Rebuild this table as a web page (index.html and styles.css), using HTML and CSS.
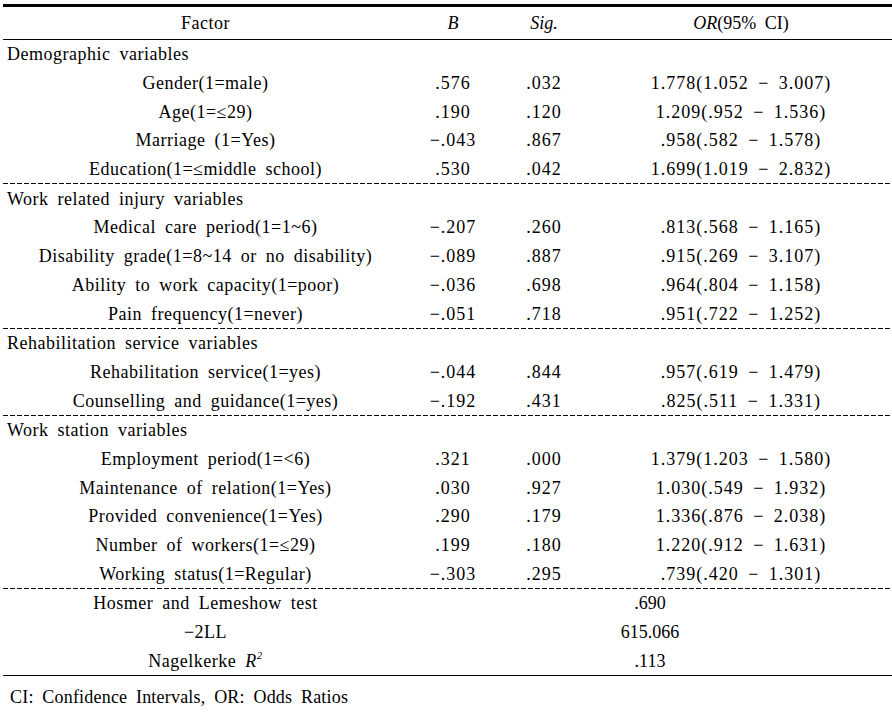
FILE: index.html
```html
<!DOCTYPE html>
<html>
<head>
<meta charset="utf-8">
<link rel="stylesheet" href="styles.css">
</head>
<body>
<div class="page">
<table class="tbl">
  <colgroup>
    <col class="c-factor"><col class="c-b"><col class="c-sig"><col class="c-or">
  </colgroup>
  <thead>
    <tr class="head">
      <th class="lbl">Factor</th><th><i>B</i></th><th><i>Sig.</i></th><th><i>OR</i>(95% CI)</th>
    </tr>
  </thead>
  <tbody>
    <tr class="sec"><td colspan="4">Demographic variables</td></tr>
    <tr><td class="lbl">Gender(1=male)</td><td class="num">.576</td><td class="num">.032</td><td class="num">1.778(1.052 − 3.007)</td></tr>
    <tr><td class="lbl">Age(1=≤29)</td><td class="num">.190</td><td class="num">.120</td><td class="num">1.209(.952 − 1.536)</td></tr>
    <tr><td class="lbl">Marriage (1=Yes)</td><td class="num">−.043</td><td class="num">.867</td><td class="num">.958(.582 − 1.578)</td></tr>
    <tr><td class="lbl">Education(1=≤middle school)</td><td class="num">.530</td><td class="num">.042</td><td class="num">1.699(1.019 − 2.832)</td></tr>
    <tr class="sep"><td colspan="4"></td></tr>
    <tr class="sec"><td colspan="4">Work related injury variables</td></tr>
    <tr><td class="lbl">Medical care period(1=1~6)</td><td class="num">−.207</td><td class="num">.260</td><td class="num">.813(.568 − 1.165)</td></tr>
    <tr><td class="lbl">Disability grade(1=8~14 or no disability)</td><td class="num">−.089</td><td class="num">.887</td><td class="num">.915(.269 − 3.107)</td></tr>
    <tr><td class="lbl">Ability to work capacity(1=poor)</td><td class="num">−.036</td><td class="num">.698</td><td class="num">.964(.804 − 1.158)</td></tr>
    <tr><td class="lbl">Pain frequency(1=never)</td><td class="num">−.051</td><td class="num">.718</td><td class="num">.951(.722 − 1.252)</td></tr>
    <tr class="sep"><td colspan="4"></td></tr>
    <tr class="sec"><td colspan="4">Rehabilitation service variables</td></tr>
    <tr><td class="lbl">Rehabilitation service(1=yes)</td><td class="num">−.044</td><td class="num">.844</td><td class="num">.957(.619 − 1.479)</td></tr>
    <tr><td class="lbl">Counselling and guidance(1=yes)</td><td class="num">−.192</td><td class="num">.431</td><td class="num">.825(.511 − 1.331)</td></tr>
    <tr class="sep"><td colspan="4"></td></tr>
    <tr class="sec"><td colspan="4">Work station variables</td></tr>
    <tr><td class="lbl">Employment period(1=&lt;6)</td><td class="num">.321</td><td class="num">.000</td><td class="num">1.379(1.203 − 1.580)</td></tr>
    <tr><td class="lbl">Maintenance of relation(1=Yes)</td><td class="num">.030</td><td class="num">.927</td><td class="num">1.030(.549 − 1.932)</td></tr>
    <tr><td class="lbl">Provided convenience(1=Yes)</td><td class="num">.290</td><td class="num">.179</td><td class="num">1.336(.876 − 2.038)</td></tr>
    <tr><td class="lbl">Number of workers(1=≤29)</td><td class="num">.199</td><td class="num">.180</td><td class="num">1.220(.912 − 1.631)</td></tr>
    <tr><td class="lbl">Working status(1=Regular)</td><td class="num">−.303</td><td class="num">.295</td><td class="num">.739(.420 − 1.301)</td></tr>
    <tr class="sep"><td colspan="4"></td></tr>
  </tbody>
  <tbody class="stats">
    <tr><td class="lbl">Hosmer and Lemeshow test</td><td colspan="3">.690</td></tr>
    <tr><td class="lbl">−2LL</td><td colspan="3">615.066</td></tr>
    <tr><td class="lbl">Nagelkerke <i>R</i><sup class="sq"><i>2</i></sup></td><td colspan="3">.113</td></tr>
  </tbody>
</table>
<p class="note">CI: Confidence Intervals, OR: Odds Ratios</p>
</div>
</body>
</html>
```

FILE: styles.css
```css
html, body {
  margin: 0;
  padding: 0;
  background: #fff;
}
body {
  font-family: "Liberation Serif", "Times New Roman", serif;
  font-size: 18px;
  color: #000;
}
.page {
  padding: 4px 0 0 3px;
}
.tbl {
  width: 889px;
  border-collapse: collapse;
  table-layout: fixed;
  word-spacing: 4px;
}
.c-factor { width: 405px; }
.c-b { width: 90px; }
.c-sig { width: 92px; }
.c-or { width: 302px; }

.tbl th {
  font-weight: normal;
  height: 32px;
  padding: 0;
  text-align: center;
  border-top: 3px solid #000;
  border-bottom: 1px solid #000;
  vertical-align: middle;
}
.tbl td {
  height: 28.7px;
  padding: 0;
  text-align: center;
  vertical-align: middle;
  line-height: 20px;
  white-space: nowrap;
}
.tbl .lbl,
.tbl tr.sec td {
  letter-spacing: 0.5px;
}
.tbl td.num {
  letter-spacing: 1px;
}
.tbl tr.sec td {
  text-align: left;
  padding-left: 4px;
}
.tbl tr.sep td {
  height: 1px;
  line-height: 0;
  font-size: 0;
  background: repeating-linear-gradient(to right, #000 0 5px, transparent 5px 7px);
}
.stats tr:last-child td {
  border-bottom: 1px solid #000;
}
.sq {
  font-size: 11px;
  vertical-align: 8px;
  line-height: 0;
}
.note {
  margin: 0;
  padding: 9px 0 0 7px;
  line-height: 24px;
  word-spacing: 4px;
  letter-spacing: 0.2px;
}
```
